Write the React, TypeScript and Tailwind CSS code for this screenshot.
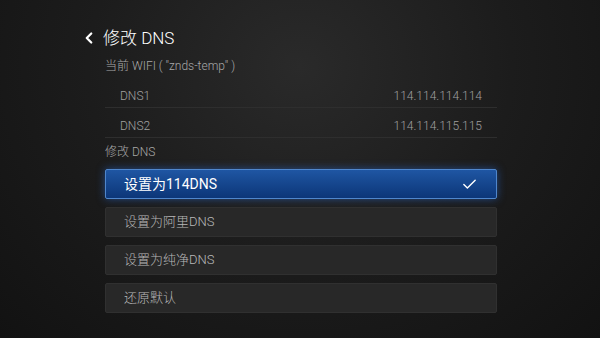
import { Check, ChevronLeft } from 'lucide-react'

const font = { fontFamily: '"Roboto", "Noto Sans CJK SC", sans-serif' }

export default function App() {
  const rows = [
    { name: 'DNS1', value: '114.114.114.114' },
    { name: 'DNS2', value: '114.114.115.115' },
  ]

  const options = ['设置为阿里DNS', '设置为纯净DNS', '还原默认']

  return (
    <div
      className="w-[600px] h-[338px] overflow-hidden bg-[radial-gradient(ellipse_at_50%_20%,#2a2a2a_0%,#1c1c1c_50%,#121212_100%)] text-white"
      style={font}
    >
      <div className="ml-[105px] w-[392px] pt-[27px]">
        {/* Header */}
        <div className="flex items-center h-[22px] -ml-[25px]">
          <ChevronLeft className="w-[18px] h-[18px] text-white" strokeWidth={3} />
          <span className="ml-[5px] text-[17px] leading-[22px] font-light text-white">修改 DNS</span>
        </div>

        {/* Current wifi */}
        <div className="mt-[9px] text-[12px] leading-[16px] font-light text-[#a8a8a8]">当前 WIFI ( "znds-temp" )</div>

        {/* DNS rows */}
        <div className="mt-[4px]">
          {rows.map((row) => (
            <div
              key={row.name}
              className="flex items-center justify-between h-[30px] pt-[6px] pl-[15px] pr-[15px] border-b border-[#2e2e2e] text-[12px] font-light text-[#a0a0a0]"
            >
              <span>{row.name}</span>
              <span>{row.value}</span>
            </div>
          ))}
        </div>

        {/* Change DNS */}
        <div className="mt-[6px] text-[12px] leading-[16px] font-light text-[#a8a8a8]">修改 DNS</div>

        <div className="mt-[9px] flex flex-col gap-[8px]">
          <div className="flex items-center justify-between h-[30px] px-[18px] rounded-[2px] border border-[#4f86cc] bg-gradient-to-b from-[#1f56a3] to-[#0c3678] shadow-[0_0_8px_rgba(40,110,220,0.55)]">
            <span className="text-[14px] text-white">设置为114DNS</span>
            <Check className="w-[17px] h-[17px] text-white" strokeWidth={2} />
          </div>
          {options.map((opt) => (
            <div
              key={opt}
              className="flex items-center h-[30px] px-[18px] rounded-[2px] border border-[#303030] bg-[#282828]"
            >
              <span className="text-[13px] font-light text-[#b8b8b8]">{opt}</span>
            </div>
          ))}
        </div>
      </div>
    </div>
  )
}
